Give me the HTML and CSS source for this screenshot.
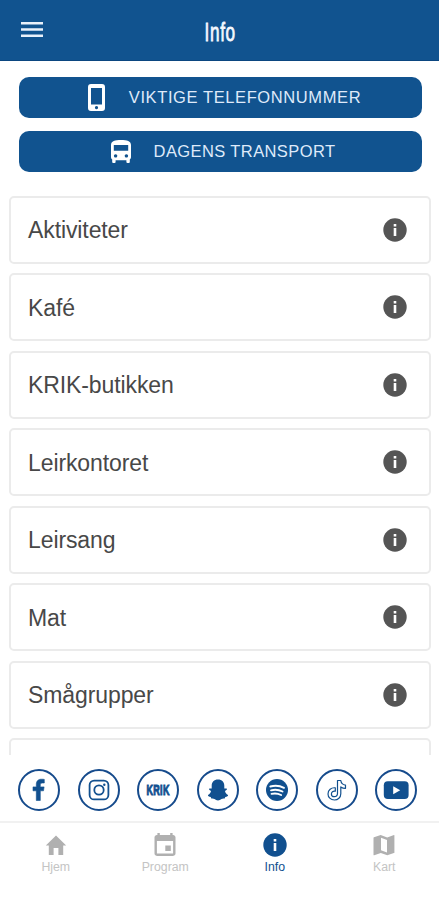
FILE: index.html
```html
<!DOCTYPE html>
<html lang="no">
<head>
    <meta charset="UTF-8">
    <meta name="viewport" content="width=device-width, initial-scale=1.0">
    <title>Info</title>
    <link rel="stylesheet" href="styles.css">
</head>
<body>
    <!-- Shared info icon -->
    <svg class="hidden">
        <symbol id="info-icon" viewBox="0 0 24 24">
            <circle cx="12" cy="12" r="11.700" fill="currentColor"/>
            <path d="M10.700 6h2.600v2.400h-2.600zM10.700 10h2.600v8h-2.600z" fill="#fff"/>
        </symbol>
    </svg>

    <!-- Header -->
    <header class="header">
        <button class="menu-button" aria-label="Meny">
            <svg width="22" height="16" viewBox="0 0 22 16"><path d="M0 0h22v2.600H0zM0 6.200h22v2.600H0zM0 12.400h22V15H0z" fill="#e9f1fb"/></svg>
        </button>
        <h1 class="title">Info</h1>
    </header>

    <!-- Main content -->
    <main class="content">
        <div class="actions">
            <button class="action-button phone">
                <svg width="17" height="27" viewBox="0 0 17 27">
                    <path fill="#fff" fill-rule="evenodd" d="M3 0h11a3 3 0 0 1 3 3v21a3 3 0 0 1-3 3H3a3 3 0 0 1-3-3V3a3 3 0 0 1 3-3zM3 4v16.500h11V4zM8.500 22a1.600 1.600 0 1 0 .01 0z"/>
                </svg>
                <span>VIKTIGE TELEFONNUMMER</span>
            </button>
            <button class="action-button transport">
                <svg width="20" height="23" viewBox="0 0 20 23">
                    <path fill="#fff" fill-rule="evenodd" d="M0 17V5C0 1 4 0 10 0s10 1 10 5v12c0 1-.5 2-1.200 2.600V22a1 1 0 0 1-1 1h-1.400a1 1 0 0 1-1-1v-1.800H4.600V22a1 1 0 0 1-1 1H2.200a1 1 0 0 1-1-1v-2.400C.5 19 0 18 0 17zM2.800 5v5.800h14.400V5zM4.600 14.200a1.700 1.700 0 1 0 .01 0zM15.400 14.200a1.700 1.700 0 1 0 .01 0z"/>
                </svg>
                <span>DAGENS TRANSPORT</span>
            </button>
        </div>

        <div class="list">
            <div class="card"><span>Aktiviteter</span><svg class="info"><use href="#info-icon"/></svg></div>
            <div class="card"><span>Kafé</span><svg class="info"><use href="#info-icon"/></svg></div>
            <div class="card"><span>KRIK-butikken</span><svg class="info"><use href="#info-icon"/></svg></div>
            <div class="card"><span>Leirkontoret</span><svg class="info"><use href="#info-icon"/></svg></div>
            <div class="card"><span>Leirsang</span><svg class="info"><use href="#info-icon"/></svg></div>
            <div class="card"><span>Mat</span><svg class="info"><use href="#info-icon"/></svg></div>
            <div class="card"><span>Smågrupper</span><svg class="info"><use href="#info-icon"/></svg></div>
            <div class="card"></div>
        </div>
    </main>

    <!-- Social links -->
    <div class="social">
        <a class="circle">
            <svg width="38" height="38" viewBox="0 0 38 38"><path fill="currentColor" d="M16.300 29.500V19.800H13v-3.900h3.300v-2.300c0-3.800 2-5.400 5.200-5.400 1.200 0 2.200.1 2.800.2v3.600h-2c-1.500 0-2 .7-2 1.900v2h3.800l-.6 3.900h-3.200v9.700z" stroke="currentColor" stroke-width=".6"/></svg>
        </a>
        <a class="circle">
            <svg width="38" height="38" viewBox="0 0 38 38" fill="none" stroke="currentColor" stroke-width="1.800"><rect x="9.600" y="9.600" width="18.800" height="18.800" rx="4.500"/><circle cx="19" cy="19" r="4.700"/><circle cx="24.300" cy="13.700" r="1.200" fill="currentColor" stroke="none"/></svg>
        </a>
        <a class="circle"><span class="krik">KRIK</span></a>
        <a class="circle">
            <svg width="38" height="38" viewBox="0 0 38 38"><path fill="currentColor" d="M19 8.500c4 0 6.300 2.600 6.300 6.200v2.800c.7.300 1.500-.4 2.300.1.800.6.200 1.700-1.600 2.500.3 1.900 1.300 3 3 4 .4 1.200-1 1.700-2.700 2l-.6 1.400c-1.500-.2-2.300-.1-3.200.6-1.100.9-2.100 1.300-3.500 1.300s-2.400-.4-3.500-1.300c-.9-.7-1.700-.8-3.200-.6l-.6-1.400c-1.700-.3-3.100-.8-2.700-2 1.700-1 2.700-2.100 3-4-1.800-.8-2.400-1.900-1.600-2.500.8-.5 1.600.2 2.300-.1v-2.800c0-3.600 2.300-6.200 6.300-6.200z"/></svg>
        </a>
        <a class="circle">
            <svg width="38" height="38" viewBox="0 0 38 38"><circle cx="19" cy="19" r="11" fill="currentColor"/><path d="M12.300 15.500c5-1.300 9.600-.8 13.700 1.300M13 19.300c4.200-1.100 8-.6 11.500 1.200M13.500 22.900c3.500-.8 6.700-.4 9.600 1.100" fill="none" stroke="#fff" stroke-width="1.900" stroke-linecap="round"/></svg>
        </a>
        <a class="circle">
            <svg width="38" height="38" viewBox="0 0 38 38"><path fill="none" stroke="currentColor" stroke-width="1.200" stroke-linejoin="round" d="M19.500 9.500h3.300c.3 2.700 2 4.300 4.700 4.600v3.200c-1.900 0-3.400-.5-4.700-1.400v6.800c0 3.800-2.900 6.300-6.400 6.300-3.800 0-6.400-2.900-6.400-6.100 0-3.900 3.200-6.600 7.300-6.100v3.400c-2.300-.5-3.900.9-3.900 2.700 0 1.600 1.300 2.800 2.900 2.800 2 0 3.200-1.400 3.200-3.400z"/></svg>
        </a>
        <a class="circle">
            <svg width="38" height="38" viewBox="0 0 38 38"><rect x="6.800" y="10.300" width="24.800" height="17.600" rx="4" fill="currentColor"/><path d="M16.200 15.200v8l7-4z" fill="#fff"/></svg>
        </a>
    </div>

    <!-- Bottom tabs -->
    <nav class="tabs">
        <a class="tab">
            <svg width="24" height="24" viewBox="0 0 24 24"><path fill="currentColor" d="M9.600 22v-7h4.800v7h4.800v-9.500h3L12 2.600 1.800 12.500h3V22z"/></svg>
            <span>Hjem</span>
        </a>
        <a class="tab">
            <svg width="24" height="24" viewBox="0 0 24 24"><path fill="currentColor" fill-rule="evenodd" d="M4.400-.5h2.400v2.400h10.400V-.5h2.400v2.400h.5c1.300 0 2.400 1 2.400 2.300v16.400c0 1.300-1.100 2.300-2.400 2.300H3.900c-1.300 0-2.400-1-2.400-2.300V4.200c0-1.300 1.100-2.300 2.400-2.300h.5zM3.900 7.900v12.700h16.200V7.900zM12.300 12.500h5.500v5.600h-5.500z"/></svg>
            <span>Program</span>
        </a>
        <a class="tab active">
            <svg width="24" height="24" viewBox="0 0 24 24"><use href="#info-icon"/></svg>
            <span>Info</span>
        </a>
        <a class="tab">
            <svg width="24" height="24" viewBox="0 0 24 24"><path fill="currentColor" fill-rule="evenodd" d="M22 2l-6.800 2.400L8.700 2 2 4.200c-.3.100-.5.300-.5.600v17c0 .4.300.6.700.5l6.600-2.400 6.500 2.300 6.600-2.200c.3-.1.500-.3.500-.6V2.500c0-.3-.1-.6-.4-.5zM9 4.700l6 2.200v12.600l-6-2.200z"/></svg>
            <span>Kart</span>
        </a>
    </nav>
</body>
</html>
```
FILE: styles.css
```css
* {
    box-sizing: border-box;
}
body {
    margin: 0;
    height: 900px;
    display: flex;
    flex-direction: column;
    overflow: hidden;
    background-color: #fff;
    font-family: "Liberation Sans", Arial, sans-serif;
}
button {
    border: none;
    padding: 0;
    background: none;
    font-family: inherit;
    cursor: pointer;
}
svg {
    display: block;
    flex-shrink: 0;
}
.hidden {
    display: none;
}

/* Header */
.header {
    height: 61px;
    flex-shrink: 0;
    display: grid;
    grid-template-columns: 60px 1fr 60px;
    align-items: center;
    background-color: #11538f;
    border-bottom: 1px solid #0b4680;
}
.menu-button {
    padding: 0 0 1px 21px;
}
.title {
    margin: 0;
    padding: 3px 0 0 2px;
    text-align: center;
    color: #f4f8ff;
    font-size: 26px;
    line-height: 32px;
    font-weight: normal;
    letter-spacing: 1px;
    -webkit-text-stroke: 0.8px #f4f8ff;
    transform: scaleX(0.66);
}

/* Content */
.content {
    height: 694px;
    flex-shrink: 0;
    overflow: hidden;
}
.actions {
    display: flex;
    flex-direction: column;
    gap: 13px;
    padding: 16px 17.500px 0 18.500px;
}
.action-button {
    height: 41px;
    display: flex;
    align-items: center;
    justify-content: center;
    border-radius: 10px;
    background-color: #11538f;
    color: #dfeafa;
    font-size: 16.500px;
}
.phone {
    gap: 24px;
    padding-left: 9px;
    letter-spacing: 0.6px;
}
.transport {
    gap: 23px;
    padding-left: 6px;
    letter-spacing: 0.4px;
}
.list {
    display: flex;
    flex-direction: column;
    gap: 9.500px;
    padding: 23.500px 8px 0 9px;
}
.card {
    height: 68px;
    flex-shrink: 0;
    display: flex;
    align-items: center;
    justify-content: space-between;
    padding: 0 22px 0 17px;
    border: 2px solid #ebebeb;
    border-radius: 5px;
    color: #484848;
    font-size: 23px;
    letter-spacing: -0.1px;
}
.card span {
    padding-top: 2px;
}
.info {
    width: 24px;
    height: 24px;
    color: #555;
}

/* Social links */
.social {
    height: 66px;
    flex-shrink: 0;
    display: flex;
    justify-content: space-between;
    align-items: center;
    padding: 3px 22px 0 18px;
}
.circle {
    width: 42px;
    height: 42px;
    display: flex;
    align-items: center;
    justify-content: center;
    border: 2px solid #164b8c;
    border-radius: 50%;
    color: #11508f;
}
.krik {
    font-size: 14px;
    font-weight: bold;
    letter-spacing: 0.5px;
    -webkit-text-stroke: 1px #11508f;
    transform: scaleX(0.64);
}

/* Bottom tabs */
.tabs {
    flex: 1;
    display: grid;
    grid-template-columns: repeat(4, 1fr);
    padding-left: 1px;
    border-top: 2px solid #f1f1f1;
}
.tab {
    display: flex;
    flex-direction: column;
    align-items: center;
    padding-top: 10px;
    color: #b0b0b0;
    font-size: 12.300px;
    line-height: 15px;
}
.tab span {
    margin-top: 3px;
    color: #c4c4c4;
}
.tab.active,
.tab.active span {
    color: #11508f;
}
```
